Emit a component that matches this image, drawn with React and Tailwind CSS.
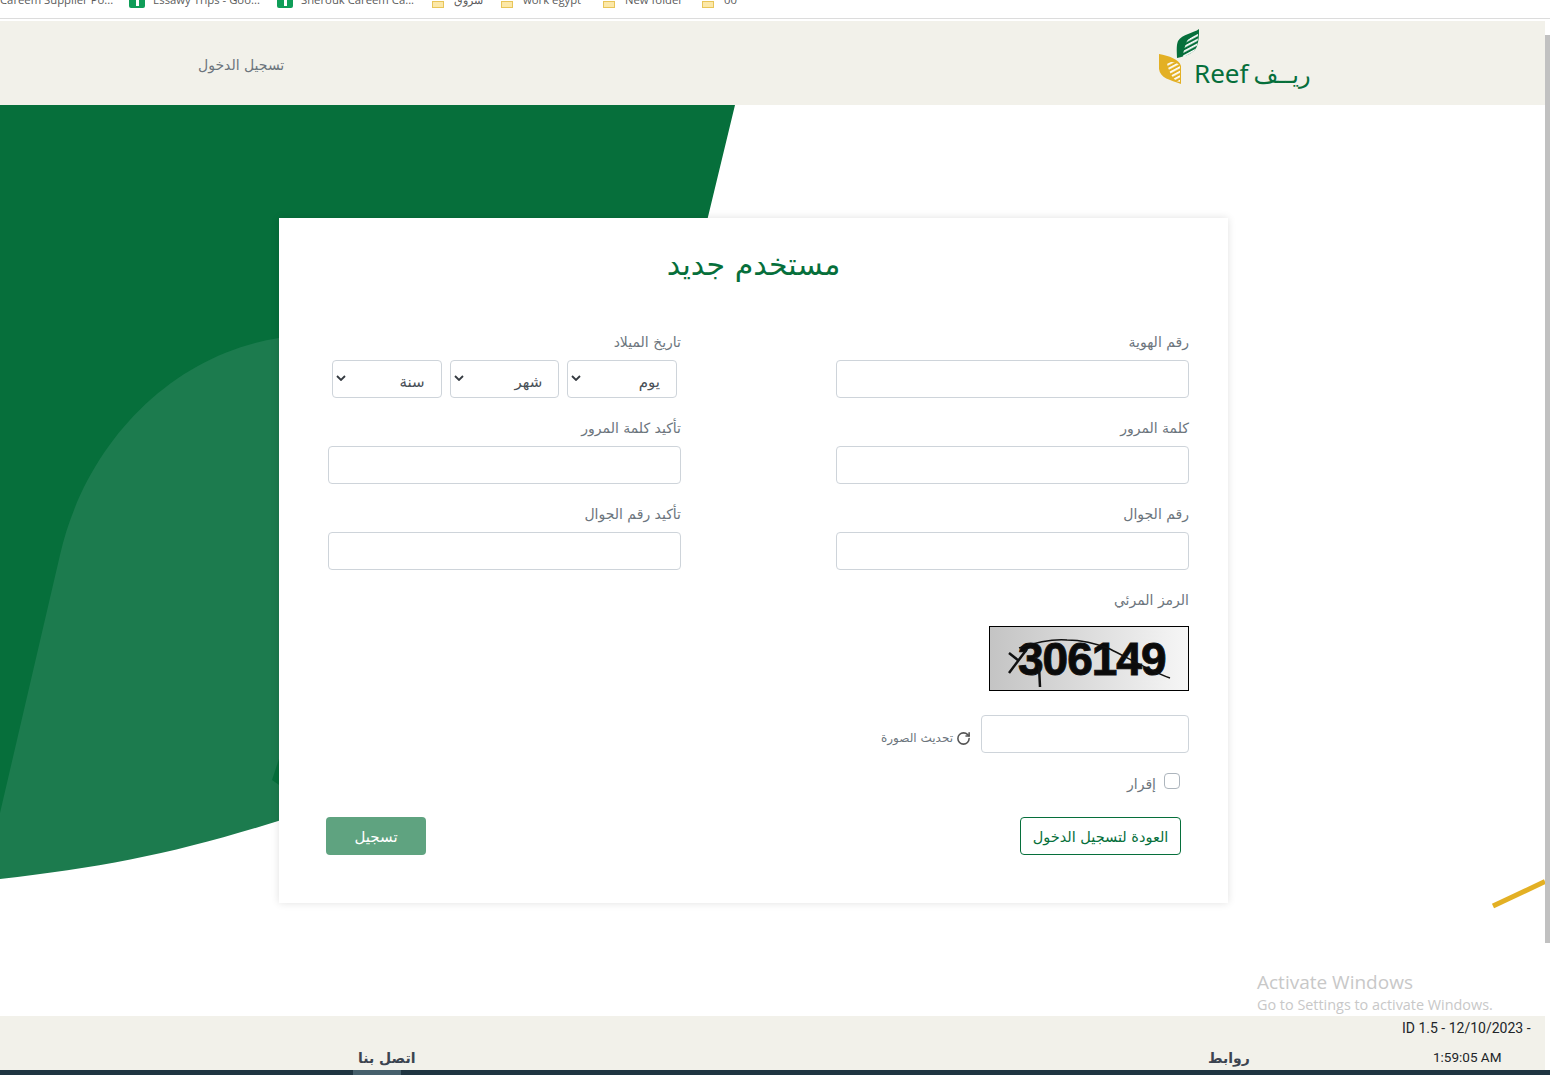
import { RotateCw } from "lucide-react";

const FONT = "font-['DejaVu_Sans',sans-serif]";

function Bookmark({ icon, label, className }) {
  return (
    <div className={`flex h-[8px] items-end gap-2 overflow-hidden ${className}`}>
      {icon === "sheet" && (
        <span className="flex h-[8px] w-[16px] shrink-0 justify-center rounded-b-[2px] bg-[#0f9d58]">
          <span className="h-[6px] w-[3px] bg-white" />
        </span>
      )}
      {icon === "folder" && <span className="mr-[2px] h-[7px] w-[12px] shrink-0 border border-[#e8c559] bg-[#fce8a8]" />}
      <span className="whitespace-nowrap font-['Open_Sans',sans-serif] text-[11.3px] leading-[16px] text-[#5b5b5b]">{label}</span>
    </div>
  );
}

function BookmarksBar() {
  return (
    <div className="flex h-[21px] items-start bg-white">
      <div className="flex h-[19px] w-full items-start overflow-hidden border-b border-[#dcdcdc]">
        <Bookmark label="Careem Supplier Po..." className="w-[129px]" />
        <Bookmark icon="sheet" label="Essawy Trips - Goo..." className="w-[148px]" />
        <Bookmark icon="sheet" label="Sherouk Careem Ca..." className="w-[155px]" />
        <Bookmark icon="folder" label="شروق" className="w-[69px]" />
        <Bookmark icon="folder" label="work egypt" className="w-[102px]" />
        <Bookmark icon="folder" label="New folder" className="w-[99px]" />
        <Bookmark icon="folder" label="00" className="w-[60px]" />
      </div>
    </div>
  );
}

function Logo() {
  return (
    <div className="mb-[6px] flex h-[64px] w-[152px] items-end">
      <svg width="42" height="56" viewBox="0 0 42 56" className="mb-[8px] shrink-0">
        <defs>
          <pattern id="stripes" width="4" height="4" patternUnits="userSpaceOnUse" patternTransform="rotate(-28)">
            <rect width="4" height="1.8" fill="#fff" />
          </pattern>
        </defs>
        <path d="M41 1 C 36 5 24 6 20 13 C 18 18 19 25 19 30 C 28 28 37 25 39 18 C 41 12 41 6 41 1 Z" fill="#066f3b" />
        <path d="M40 4 C 36 8 31 10 29 13 C 27 18 25 23 25 29 C 31 27 37 24 39 18 C 40 13 40 9 40 4 Z" fill="url(#stripes)" />
        <path d="M1 26 L 1 41 C 2 50 12 52 23 56 L 23 38 C 21 31 11 28 1 26 Z" fill="#e3b024" />
        <path d="M9 35 C 10 41 13 48 18 53 L 22 54 L 22 38 C 19 34 14 33 9 35 Z" fill="url(#stripes)" />
      </svg>
      <span className="relative bottom-[3px] -ml-[6px] font-['Noto_Sans',sans-serif] text-[26px] leading-[32px] text-[#066f3b]">Reef</span>
      <span className={`relative bottom-[1px] ml-[5px] whitespace-nowrap ${FONT} text-[24px] leading-[32px] text-[#066f3b]`} dir="rtl">ريــف</span>
    </div>
  );
}

function Header() {
  return (
    <header className="flex h-[84px] items-center justify-between bg-[#f2f1ea] pl-[198px] pr-[235px]">
      <a className={`${FONT} relative top-[2px] text-[14px] text-[#6c757d]`} dir="rtl">تسجيل الدخول</a>
      <Logo />
    </header>
  );
}

function Backdrop() {
  return (
    <svg className="absolute inset-0 h-full w-full" viewBox="0 0 1545 911" preserveAspectRatio="none">
      <path d="M0 0 H735 L700 145 L300 400 L 300 640 L0 710 Z" fill="#066f3b" />
      <path d="M279 233 C 170 250 85 340 60 450 L 0 708 V 774 C 110 762 190 745 300 709 L 300 233 Z" fill="#1c7b4e" />
      <path d="M282 645 L 272 675 L 282 682 Z" fill="#066f3b" />
      <path d="M1493 801 L 1545 776.5" stroke="#e3b024" strokeWidth="5" fill="none" />
    </svg>
  );
}

function Field({ label, children }) {
  return (
    <div className="flex w-[353px] flex-col gap-2">
      <label className="h-[20px] text-[14px] leading-[20px] text-[#6c757d]">{label}</label>
      {children}
    </div>
  );
}

function TextInput({ className = "w-full" }) {
  return <input className={`h-[38px] rounded-[4px] border border-[#ced4da] bg-white ${className}`} />;
}

function DatePart({ label }) {
  return (
    <div className="flex h-[38px] items-center justify-between rounded-[4px] border border-[#ced4da] bg-white pl-[3px] pr-[16px] text-[15px] text-[#495057]">
      <span className="relative top-[3px]">{label}</span>
      <svg width="10" height="6" viewBox="0 0 10 6" className="relative bottom-[1px]">
        <path d="M1 1 L5 5 L9 1" fill="none" stroke="#343a40" strokeWidth="1.8" />
      </svg>
    </div>
  );
}

function Captcha() {
  return (
    <div className="h-[65px] w-[200px] border border-black bg-gradient-to-r from-[#c4c4c4] to-[#f6f6f6]" dir="ltr">
      <svg width="198" height="63" viewBox="0 0 198 63">
        <text x="28" y="48" fontFamily="Liberation Sans, sans-serif" fontWeight="700" fontSize="46" letterSpacing="-1" fill="#0b0b0b" stroke="#111" strokeWidth="1">306149</text>
        <path d="M19 26 L 29 34 M19 46 L 37 22 M49 39 L50 60" stroke="#111" strokeWidth="2.5" fill="none" />
        <path d="M29 21 C 50 14 65 12 77 13 C 95 13 110 18 120 22 C 140 32 160 44 180 51" stroke="#111" strokeWidth="1.5" fill="none" />
      </svg>
    </div>
  );
}

function RegisterCard() {
  return (
    <div className="relative z-10 flex h-[685px] w-[949px] flex-col bg-white pt-[28px] shadow-[0_0_8px_rgba(0,0,0,0.12)]" dir="rtl">
      <h1 className="mb-[46px] h-[40px] text-center text-[30px] leading-[38px] text-[#066f3b]">مستخدم جديد</h1>
      <div className="flex flex-col gap-5 pl-[49px] pr-[39px]">
        <div className="flex justify-between">
          <Field label="رقم الهوية"><TextInput /></Field>
          <Field label="تاريخ الميلاد">
            <div className="grid grid-cols-3 gap-2 px-1">
              <DatePart label="يوم" />
              <DatePart label="شهر" />
              <DatePart label="سنة" />
            </div>
          </Field>
        </div>
        <div className="flex justify-between">
          <Field label="كلمة المرور"><TextInput /></Field>
          <Field label="تأكيد كلمة المرور"><TextInput /></Field>
        </div>
        <div className="flex justify-between">
          <Field label="رقم الجوال"><TextInput /></Field>
          <Field label="تأكيد رقم الجوال"><TextInput /></Field>
        </div>
        <div className="flex flex-col">
          <label className="mb-4 h-[20px] text-[14px] leading-[20px] text-[#6c757d]">الرمز المرئي</label>
          <Captcha />
          <div className="mt-6 flex items-center gap-[10px]">
            <TextInput className="w-[208px]" />
            <span className="relative top-[4px] flex items-center gap-[3px] text-[12px] text-[#6c757d]">
              <RotateCw size={15} strokeWidth={2.5} className="text-[#555]" />
              <span>تحديث الصورة</span>
            </span>
          </div>
          <div className="mt-5 flex h-[16px] items-center gap-2 pr-[9px]">
            <span className="h-[16px] w-[16px] rounded-[4px] border border-[#adb5bd] bg-white" />
            <label className="relative top-[3px] text-[14px] text-[#6c757d]">إقرار</label>
          </div>
        </div>
      </div>
      <div className="mt-[28px] flex justify-between px-[47px]">
        <a className="flex h-[38px] w-[161px] items-center justify-center rounded-[4px] border border-[#066f3b] pt-[3px] text-[14.5px] text-[#066f3b]">العودة لتسجيل الدخول</a>
        <button className="h-[38px] w-[100px] rounded-[4px] bg-[#5fa380] pt-[2px] text-[15px] text-white">تسجيل</button>
      </div>
    </div>
  );
}

function Footer() {
  return (
    <footer className="relative flex h-[54px] bg-[#f2f1ea]">
      <div className={`${FONT} absolute left-[358px] top-[30px] text-[14px] font-bold leading-[24px] text-[#3c4450]`} dir="rtl">اتصل بنا</div>
      <div className={`${FONT} absolute left-[1208px] top-[30px] text-[14px] font-bold leading-[24px] text-[#3c4450]`} dir="rtl">روابط</div>
      <div className="absolute left-[1402px] top-[3px] whitespace-nowrap font-['Roboto',sans-serif] text-[14px] leading-[18px] text-[#212529]">ID 1.5 - 12/10/2023 -</div>
      <div className="absolute left-[1433px] top-[32px] whitespace-nowrap font-['Roboto',sans-serif] text-[13.5px] leading-[18px] text-[#212529]">1:59:05 AM</div>
    </footer>
  );
}

export default function App() {
  return (
    <div className={`h-[1075px] w-[1550px] overflow-hidden bg-white ${FONT}`}>
      <BookmarksBar />
      <div className="flex h-[1049px]">
        <div className="w-[1545px]">
          <Header />
          <main className="relative h-[911px] overflow-hidden pl-[279px] pt-[113px]">
            <Backdrop />
            <RegisterCard />
            <div className="absolute left-[1257px] top-[866px] z-20 font-['Open_Sans',sans-serif] text-[#c8c8c8]">
              <div className="text-[19px] leading-[23px]">Activate Windows</div>
              <div className="text-[14.4px] leading-[21px]">Go to Settings to activate Windows.</div>
            </div>
          </main>
          <Footer />
        </div>
        <div className="flex w-[5px] flex-col pt-[14px]">
          <div className="h-[908px] bg-[#c1c1c1]" />
        </div>
      </div>
      <div className="relative h-[5px] bg-[#1f3541]">
        <div className="ml-[353px] h-full w-[48px] bg-[#46606c]" />
      </div>
    </div>
  );
}
